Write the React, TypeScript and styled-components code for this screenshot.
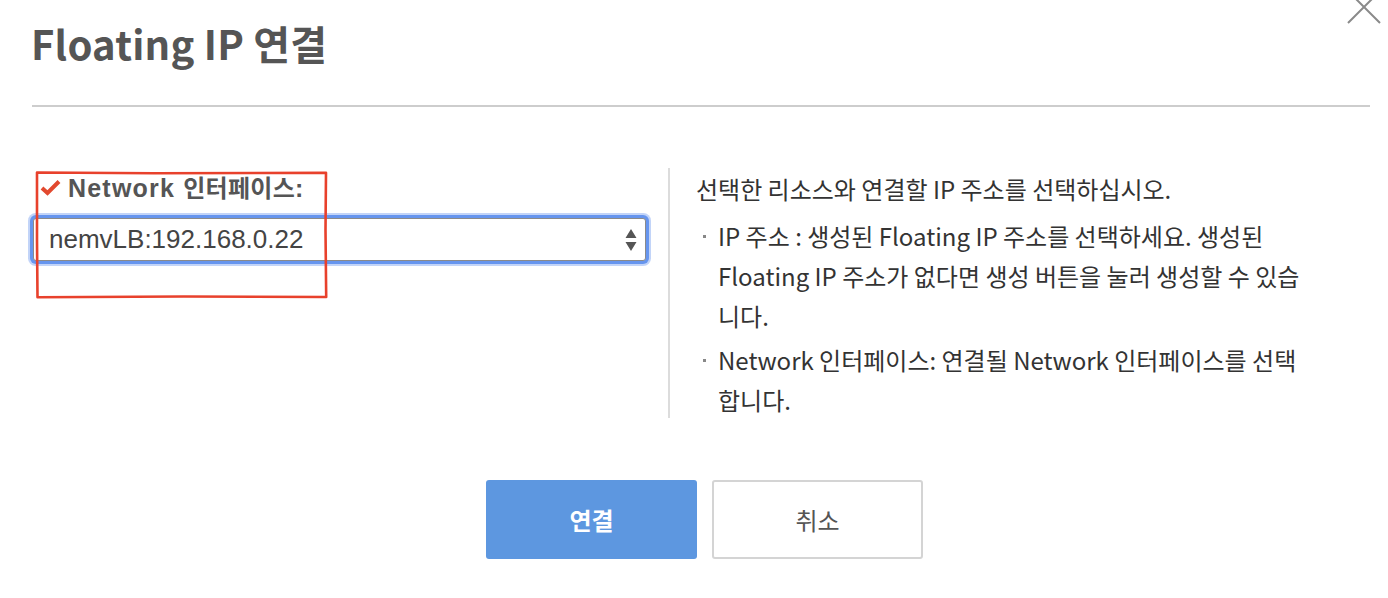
import React from "react";
import styled, { createGlobalStyle } from "styled-components";

const Global = createGlobalStyle`
  html, body { margin: 0; padding: 0; background: #fff; }
  body { font-family: "Noto Sans CJK KR", "Noto Sans", sans-serif; overflow: hidden; }
`;

const Dialog = styled.div`
  position: relative;
  width: 1388px;
  height: 598px;
  box-sizing: border-box;
  padding: 0 18px 0 32px;
`;

const Header = styled.header`
  height: 105px;
  display: flex;
  align-items: flex-start;
`;

const Title = styled.h1`
  margin: 16px 0 0 -1px;
  font-size: 40px;
  line-height: 54px;
  font-weight: 700;
  color: #555;
  letter-spacing: 0.2px;
`;

const Rule = styled.hr`
  margin: 0;
  border: 0;
  height: 2px;
  background: #cdcdcd;
`;

const CloseButton = styled.button`
  position: absolute;
  top: -11px;
  right: 6px;
  width: 36px;
  height: 36px;
  padding: 0;
  border: 0;
  background: transparent;
  display: flex;
  align-items: center;
  justify-content: center;
`;

const Body = styled.div`
  display: grid;
  grid-template-columns: 614px 1fr;
  margin-top: 61px;
`;

const LeftCol = styled.div`
  position: relative;
  padding-top: 4px;
`;

const Label = styled.label`
  display: flex;
  align-items: center;
  gap: 7px;
  margin-left: 8px;
  font-family: "Liberation Sans", "Noto Sans CJK KR", sans-serif;
  font-size: 25px;
  font-weight: 700;
  color: #555;
  line-height: 30px;
  letter-spacing: 1.2px;
`;

const Hangul = styled.span`
  font-family: "Noto Sans CJK KR", sans-serif;
  font-size: 24px;
  letter-spacing: 0.3px;
`;

const SelectBox = styled.div`
  margin-top: 15px;
  margin-left: 1px;
  height: 43px;
  box-sizing: border-box;
  border: 1px solid #8a8a8a;
  border-radius: 3px;
  background: #fff;
  box-shadow: 0 0 0 3px #6695ee, 0 0 0 5px rgba(120, 160, 240, 0.45);
  display: flex;
  align-items: center;
  justify-content: space-between;
  padding: 0 8px 0 15px;
  font-family: "Liberation Sans", sans-serif;
  font-size: 26px;
  color: #444;
`;

const Annotation = styled.svg`
  position: absolute;
  left: 2px;
  top: 2px;
  pointer-events: none;
`;

const RightCol = styled.div`
  margin-left: 22px;
  border-left: 2px solid #dcdcdc;
  height: 250px;
  box-sizing: border-box;
  padding: 1px 0 0 26px;
  font-size: 24px;
  color: #333;
  line-height: 40px;
`;

const Intro = styled.p`
  margin: 0 0 7px 0;
`;

const List = styled.ul`
  margin: 0;
  padding: 0;
  list-style: none;
`;

const Item = styled.li`
  position: relative;
  padding-left: 22px;
  margin-bottom: 4px;
  width: 612px;
  box-sizing: border-box;
  &::before {
    content: "";
    position: absolute;
    left: 7px;
    top: 19px;
    width: 3px;
    height: 3px;
    background: #888;
  }
`;

const Footer = styled.div`
  display: flex;
  justify-content: center;
  gap: 15px;
  margin-top: 62px;
  padding-left: 7px;
`;

const Button = styled.button<{ $primary?: boolean }>`
  width: 211px;
  height: 79px;
  box-sizing: border-box;
  border-radius: 3px;
  font-family: "Noto Sans CJK KR", sans-serif;
  font-size: 24px;
  font-weight: ${(p) => (p.$primary ? 700 : 400)};
  color: ${(p) => (p.$primary ? "#fff" : "#555")};
  background: ${(p) => (p.$primary ? "#5d97e0" : "#fff")};
  border: ${(p) => (p.$primary ? "none" : "2px solid #d4d4d4")};
  cursor: pointer;
`;

export default function App() {
  return (
    <>
      <Global />
      <Dialog>
        <Header>
          <Title>Floating IP 연결</Title>
        </Header>
        <Rule />
        <CloseButton aria-label="close">
          <svg width="34" height="34" viewBox="0 0 34 34">
            <path d="M1 1 L33 33 M33 1 L1 33" stroke="#8a8a8a" strokeWidth="2" fill="none" />
          </svg>
        </CloseButton>
        <Body>
          <LeftCol>
            <Label>
              <svg width="21" height="17" viewBox="0 0 21 17">
                <path d="M2 9 L7.5 14 L19 2.5" stroke="#e2492f" strokeWidth="4" fill="none" strokeLinejoin="miter" />
              </svg>
              <span>
                Network <Hangul>인터페이스</Hangul>:
              </span>
            </Label>
            <SelectBox>
              <span>nemvLB:192.168.0.22</span>
              <svg width="12" height="24" viewBox="0 0 12 24">
                <path d="M6 1 L11.5 10 L0.5 10 Z M0.5 14 L11.5 14 L6 23 Z" fill="#555" />
              </svg>
            </SelectBox>
            <Annotation width="296" height="130" viewBox="0 0 296 130">
              <path
                d="M3 2.5 L120 3.2 L292 2.8 L291.5 60 L292.2 127 L150 126.5 L3.5 127.2 L3 70 Z"
                stroke="#e8412c"
                strokeWidth="2.6"
                fill="none"
                strokeLinejoin="round"
              />
            </Annotation>
          </LeftCol>
          <RightCol>
            <Intro>선택한 리소스와 연결할 IP 주소를 선택하십시오.</Intro>
            <List>
              <Item>
                IP 주소 : 생성된 Floating IP 주소를 선택하세요. 생성된 Floating IP 주소가 없다면 생성 버튼을 눌러 생성할 수 있습니다.
              </Item>
              <Item>Network 인터페이스: 연결될 Network 인터페이스를 선택합니다.</Item>
            </List>
          </RightCol>
        </Body>
        <Footer>
          <Button $primary>연결</Button>
          <Button>취소</Button>
        </Footer>
      </Dialog>
    </>
  );
}
